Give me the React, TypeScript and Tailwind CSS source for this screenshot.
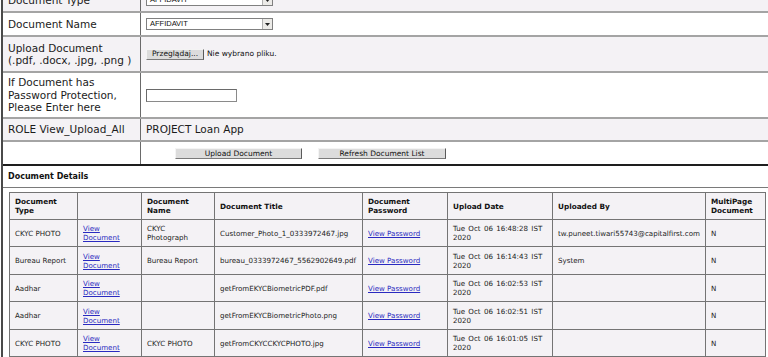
import React from "react";

const rows = [
  { type: "CKYC PHOTO", name: ["CKYC", "Photograph"], title: "Customer_Photo_1_0333972467.jpg", date: "Tue Oct 06 16:48:28 IST", by: "tw.puneet.tiwari55743@capitalfirst.com", h: "h-[27px]" },
  { type: "Bureau Report", name: ["Bureau Report"], title: "bureau_0333972467_5562902649.pdf", date: "Tue Oct 06 16:14:43 IST", by: "System", h: "h-[28px]" },
  { type: "Aadhar", name: [], title: "getFromEKYCBiometricPDF.pdf", date: "Tue Oct 06 16:02:53 IST", by: "", h: "h-[27px]" },
  { type: "Aadhar", name: [], title: "getFromEKYCBiometricPhoto.png", date: "Tue Oct 06 16:02:51 IST", by: "", h: "h-[28px]" },
  { type: "CKYC PHOTO", name: ["CKYC PHOTO"], title: "getFromCKYCCKYCPHOTO.jpg", date: "Tue Oct 06 16:01:05 IST", by: "", h: "h-[27px]" },
];

function Select({ value }: { value: string }) {
  return (
    <div className="flex h-[12px] w-[127px] items-stretch border border-[#808080] bg-white">
      <div className="flex-1 pl-[3px] text-[7.5px] leading-[10px] text-[#111] font-['Liberation_Sans',sans-serif]">{value}</div>
      <div className="flex w-[10px] items-center justify-center border-l border-[#b0b0b0] bg-[#ecebe8]">
        <svg width="5" height="3" viewBox="0 0 5 3"><path d="M0 0h5L2.5 3z" fill="#222" /></svg>
      </div>
    </div>
  );
}

function Btn({ children, w }: { children: React.ReactNode; w: string }) {
  return (
    <div className={`${w} flex h-[11px] items-center justify-center border-t border-l border-t-[#f4f4f4] border-l-[#f4f4f4] border-r border-b border-r-[#5a5a5a] border-b-[#7a7a7a] bg-[#dcdcdc] text-[7.5px] leading-none text-[#111] font-['DejaVu_Sans',sans-serif]`}>
      {children}
    </div>
  );
}

export default function App() {
  const th = "border border-[#747474] px-[5px] text-left align-middle font-bold text-[7.3px] leading-[9px] text-[#111]";
  const td = "border border-[#747474] px-[5px] align-middle text-[7.1px] leading-[9px] text-[#222]";
  return (
    <div className="h-[357px] w-[768px] overflow-hidden bg-white font-['DejaVu_Sans',sans-serif] text-[#1b1b1b]">
      <div className="ml-[1px] -mt-[11px] border-l-2 border-[#4a4a4a]">
        {/* form */}
        <div className="text-[10.5px] leading-[12.5px]">
          <div className="flex h-[24px] border-b-2 border-[#a4a4a4] bg-[#f4f2f5]">
            <div className="flex w-[138px] items-center border-r border-[#6a6a6a] px-[5px]">Document Type</div>
            <div className="flex flex-1 items-center pl-[5px]"><Select value="AFFIDAVIT" /></div>
          </div>
          <div className="flex h-[24px] border-b-2 border-[#a4a4a4] bg-white">
            <div className="flex w-[138px] items-center border-r border-[#6a6a6a] px-[5px]">Document Name</div>
            <div className="flex flex-1 items-center pl-[5px]"><Select value="AFFIDAVIT" /></div>
          </div>
          <div className="flex h-[36px] border-b-2 border-[#a4a4a4] bg-[#f4f2f5]">
            <div className="flex w-[138px] items-center border-r border-[#6a6a6a] px-[5px]">Upload Document<br />(.pdf, .docx, .jpg, .png )</div>
            <div className="flex flex-1 items-center gap-[3px] pl-[5px]">
              <Btn w="w-[58px]">Przeglądaj...</Btn>
              <span className="text-[7.5px] text-[#111]">Nie wybrano pliku.</span>
            </div>
          </div>
          <div className="flex h-[46px] border-b-2 border-[#a4a4a4] bg-white">
            <div className="flex w-[138px] items-center border-r border-[#6a6a6a] px-[5px]">If Document has<br />Password Protection,<br />Please Enter here</div>
            <div className="flex flex-1 items-center pl-[5px]">
              <div className="h-[13px] w-[91px] border border-[#8a8a8a] border-t-[#6a6a6a] border-l-[#6a6a6a] bg-white" />
            </div>
          </div>
          <div className="flex h-[23px] border-b-2 border-[#a4a4a4] bg-[#f4f2f5]">
            <div className="flex w-[138px] items-center border-r border-[#6a6a6a] px-[5px]">ROLE View_Upload_All</div>
            <div className="flex flex-1 items-center pl-[5px]">PROJECT Loan App</div>
          </div>
          <div className="flex h-[24px] border-b-2 border-[#1e1e1e] bg-white">
            <div className="w-[138px] border-r border-[#6a6a6a]" />
            <div className="flex flex-1 items-center gap-[16px] pl-[34px] pt-[1px]">
              <Btn w="w-[127px]">Upload Document</Btn>
              <Btn w="w-[128px]">Refresh Document List</Btn>
            </div>
          </div>
        </div>

        {/* details */}
        <div className="flex h-[22px] items-center border-b border-[#7a7a7a] px-[5px] pt-[1px] text-[8px] font-bold text-[#111]">Document Details</div>
        <div className="pl-[6px] pt-[4px]">
          <table className="w-[756px] table-fixed border-collapse bg-[#f4f2f5]">
            <colgroup>
              <col className="w-[68px]" />
              <col className="w-[64px]" />
              <col className="w-[73px]" />
              <col className="w-[148px]" />
              <col className="w-[85px]" />
              <col className="w-[105px]" />
              <col className="w-[153px]" />
              <col className="w-[60px]" />
            </colgroup>
            <thead>
              <tr className="h-[27px]">
                <th className={th}>Document<br />Type</th>
                <th className={th}></th>
                <th className={th}>Document<br />Name</th>
                <th className={th}>Document Title</th>
                <th className={th}>Document<br />Password</th>
                <th className={th}>Upload Date</th>
                <th className={th}>Uploaded By</th>
                <th className={th}>MultiPage<br />Document</th>
              </tr>
            </thead>
            <tbody>
              {rows.map((r, i) => (
                <tr key={i} className={r.h}>
                  <td className={td}>{r.type}</td>
                  <td className={td}>
                    <span className="text-[#2a2ac0] underline">View<br />Document</span>
                  </td>
                  <td className={td}>
                    {r.name.map((n, j) => (
                      <React.Fragment key={j}>{j > 0 && <br />}{n}</React.Fragment>
                    ))}
                  </td>
                  <td className={`${td} whitespace-nowrap`}>{r.title}</td>
                  <td className={`${td} whitespace-nowrap`}><span className="text-[#2a2ac0] underline">View Password</span></td>
                  <td className={`${td} [word-spacing:1px]`}>{r.date}<br />2020</td>
                  <td className={`${td} whitespace-nowrap`}>{r.by}</td>
                  <td className={td}>N</td>
                </tr>
              ))}
            </tbody>
          </table>
        </div>
      </div>
    </div>
  );
}
